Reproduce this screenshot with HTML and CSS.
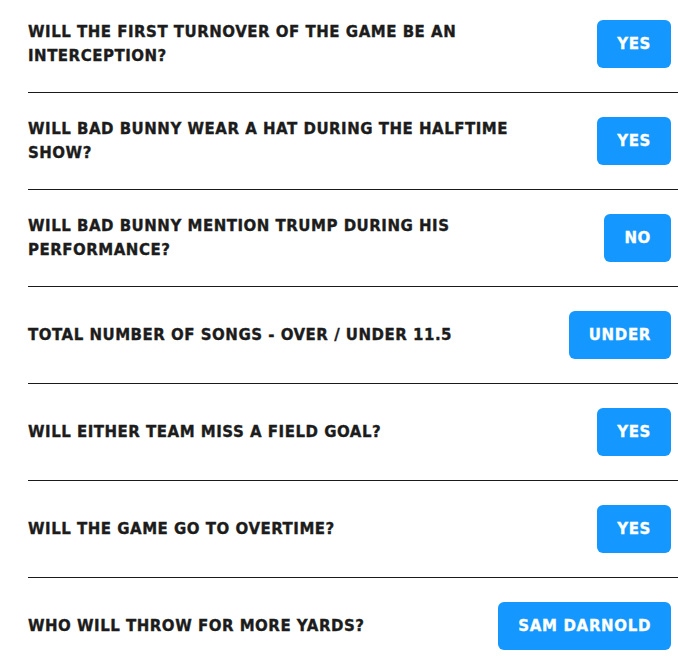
FILE: index.html
```html
<!DOCTYPE html>
<html>
<head>
<meta charset="utf-8">
<link rel="stylesheet" href="styles.css">
</head>
<body>
<div class="list">
  <div class="row">
    <div class="q">Will the first turnover of the game be an interception?</div>
    <div class="btn">Yes</div>
  </div>
  <div class="row">
    <div class="q">Will Bad Bunny wear a hat during the halftime show?</div>
    <div class="btn">Yes</div>
  </div>
  <div class="row">
    <div class="q">Will Bad Bunny mention Trump during his performance?</div>
    <div class="btn">No</div>
  </div>
  <div class="row">
    <div class="q">Total number of songs - Over / Under 11.5</div>
    <div class="btn">Under</div>
  </div>
  <div class="row">
    <div class="q">Will either team miss a field goal?</div>
    <div class="btn">Yes</div>
  </div>
  <div class="row">
    <div class="q">Will the game go to overtime?</div>
    <div class="btn">Yes</div>
  </div>
  <div class="row">
    <div class="q">Who will throw for more yards?</div>
    <div class="btn">Sam Darnold</div>
  </div>
</div>
</body>
</html>
```
FILE: styles.css
```css
html, body {
  margin: 0;
  padding: 0;
  background: #ffffff;
}
body {
  overflow: hidden;
}
.list {
  margin-left: 28px;
  margin-top: -4px;
}
.row {
  display: flex;
  align-items: center;
  justify-content: space-between;
  padding: 24px 7px 24px 0;
  border-bottom: 1px solid #1a1a1a;
}
.row:last-child {
  border-bottom: none;
}
.q {
  font-family: "DejaVu Sans", sans-serif;
  font-weight: 700;
  font-size: 15px;
  line-height: 24px;
  text-transform: uppercase;
  color: #1c1c1c;
  letter-spacing: 0.5px;
  -webkit-text-stroke: 0.35px #1c1c1c;
  max-width: 510px;
}
.btn {
  flex: none;
  height: 48px;
  display: flex;
  align-items: center;
  padding: 0 20px;
  background: #1497ff;
  border-radius: 6px;
  color: #ffffff;
  font-family: "DejaVu Sans", sans-serif;
  font-weight: 700;
  font-size: 15px;
  letter-spacing: 0.65px;
  -webkit-text-stroke: 0.35px #ffffff;
  text-transform: uppercase;
}
```
